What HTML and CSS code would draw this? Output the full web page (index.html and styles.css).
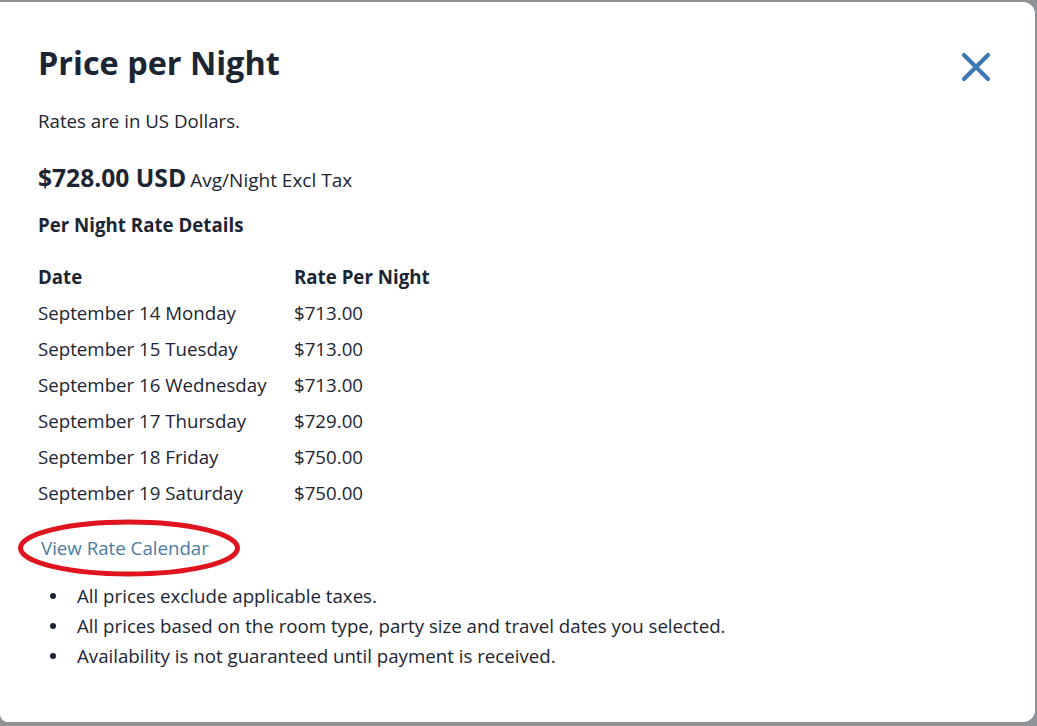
FILE: index.html
```html
<!DOCTYPE html>
<html>
<head>
<meta charset="utf-8">
<link rel="stylesheet" href="styles.css">
</head>
<body>
<div class="modal">
  <div class="head">
    <h1 class="title">Price per Night</h1>
    <button class="close" aria-label="Close">
      <svg width="30" height="30" viewBox="0 0 30 30"><path d="M3 3 L27 27 M27 3 L3 27" stroke="#3b78b4" stroke-width="4.2" stroke-linecap="round"/></svg>
    </button>
  </div>
  <p class="note">Rates are in US Dollars.</p>
  <p class="avg"><span class="amount">$728.00 USD</span> <span class="avg-label">Avg/Night Excl Tax</span></p>
  <h2 class="sub">Per Night Rate Details</h2>
  <div class="table">
    <div class="row th"><span>Date</span><span>Rate Per Night</span></div>
    <div class="row"><span>September 14 Monday</span><span>$713.00</span></div>
    <div class="row"><span>September 15 Tuesday</span><span>$713.00</span></div>
    <div class="row"><span>September 16 Wednesday</span><span>$713.00</span></div>
    <div class="row"><span>September 17 Thursday</span><span>$729.00</span></div>
    <div class="row"><span>September 18 Friday</span><span>$750.00</span></div>
    <div class="row"><span>September 19 Saturday</span><span>$750.00</span></div>
  </div>
  <div class="link-wrap">
    <a class="link" href="#">View Rate Calendar</a>
    <svg class="circle" width="226" height="62" viewBox="0 0 226 62"><ellipse cx="113" cy="31" rx="108.5" ry="26" fill="none" stroke="#e0141e" stroke-width="5"/></svg>
  </div>
  <ul class="bullets">
    <li>All prices exclude applicable taxes.</li>
    <li>All prices based on the room type, party size and travel dates you selected.</li>
    <li>Availability is not guaranteed until payment is received.</li>
  </ul>
</div>
</body>
</html>
```

FILE: styles.css
```css
html, body {
  margin: 0;
  padding: 0;
  height: 726px;
  background: #8f9396;
  overflow: hidden;
}
body {
  font-family: "Open Sans", Lato, sans-serif;
  color: #1b2533;
  padding-top: 2px;
  box-sizing: border-box;
}
.modal {
  background: #fff;
  height: 720px;
  width: 1035px;
  border-bottom-left-radius: 8px;
  border-top-right-radius: 12px;
  border-bottom-right-radius: 12px;
  box-sizing: border-box;
  padding: 38px 42px 0 38px;
}
.head {
  display: flex;
  justify-content: space-between;
  align-items: flex-start;
}
.title {
  margin: 0;
  font-size: 32.4px;
  font-weight: 700;
  line-height: 44px;
  letter-spacing: 0;
}
.close {
  background: none;
  border: 0;
  padding: 0;
  margin: 12px 2px 0 0;
  width: 30px;
  height: 30px;
}
.note {
  margin: 25px 0 0;
  font-size: 18.7px;
  line-height: 24px;
}
.avg {
  margin: 31px 0 0;
  line-height: 28px;
}
.amount {
  font-size: 24.6px;
  font-weight: 700;
}
.avg-label {
  font-size: 19px;
}
.sub {
  margin: 18px 0 0;
  font-size: 18.7px;
  font-weight: 700;
  line-height: 24px;
}
.table {
  margin-top: 28px;
}
.row {
  display: grid;
  grid-template-columns: 256px auto;
  font-size: 18.7px;
  line-height: 36px;
}
.row.th {
  font-weight: 700;
  line-height: 24px;
  margin-bottom: 6px;
}
.link-wrap {
  position: relative;
  margin-top: 25px;
  padding-left: 3px;
  line-height: 24px;
}
.link {
  color: #4b7ca2;
  text-decoration: none;
  font-size: 18.7px;
}
.circle {
  position: absolute;
  left: -22px;
  top: -19px;
}
.bullets {
  margin: 20px 0 0;
  padding: 0;
  list-style: none;
  font-size: 18.7px;
  line-height: 30px;
}
.bullets li {
  display: flex;
  align-items: center;
}
.bullets li::before {
  content: "";
  width: 6px;
  height: 6px;
  border-radius: 50%;
  background: #1b2533;
  margin: 0 21px 0 12px;
  flex: none;
}
```
